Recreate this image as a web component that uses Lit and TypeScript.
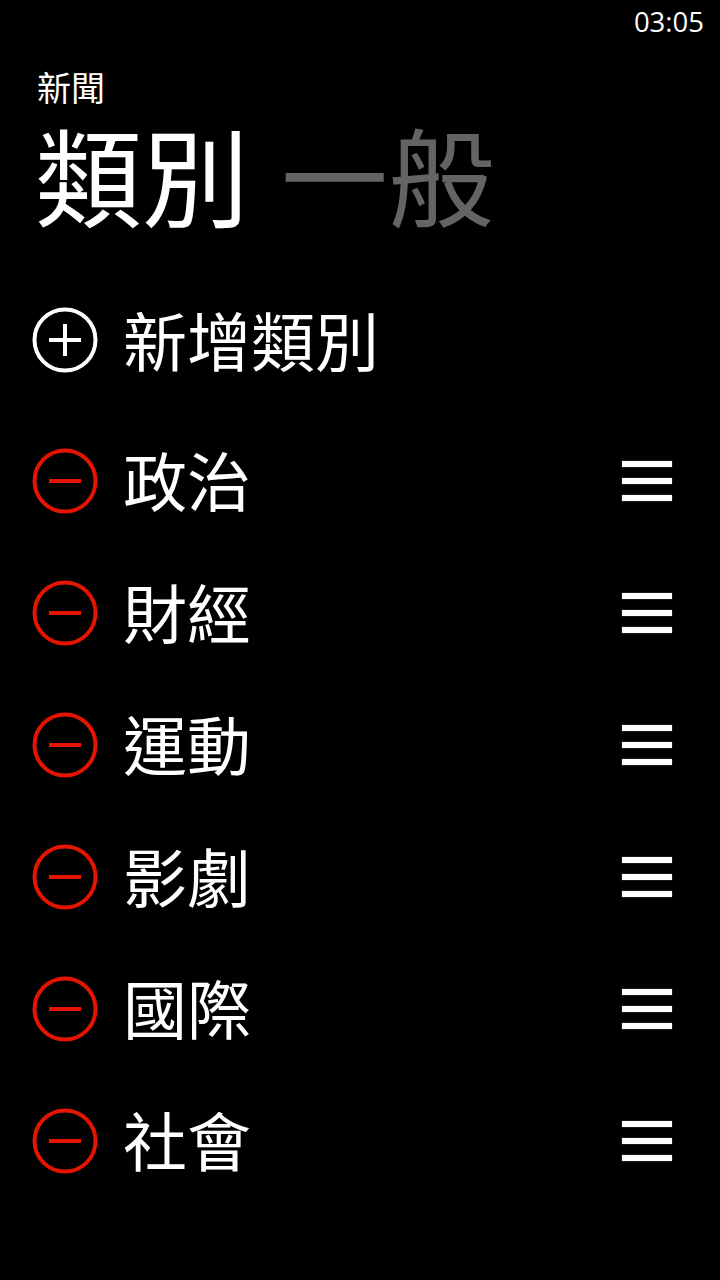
import { LitElement, html, css } from "lit";
import { customElement } from "lit/decorators.js";

const items = ["政治", "財經", "運動", "影劇", "國際", "社會"];

@customElement("app-root")
export class AppRoot extends LitElement {
  static styles = css`
    :host { display: block; width: 720px; height: 1280px; background: #000; color: #fff; overflow: hidden;
      font-family: "Noto Sans CJK TC", "Noto Sans CJK SC", sans-serif; }
    .status { display: flex; justify-content: flex-end; padding: 3px 16px 0 0; height: 40px; box-sizing: border-box; font: 27.5px/38px "Open Sans", sans-serif; }
    .app { margin: 27px 0 0 37px; font-size: 34px; line-height: 40px; height: 40px; }
    .pivot { display: flex; gap: 32px; margin: 14px 0 0 35px; font-size: 107px; line-height: 104px; height: 104px; }
    .pivot span { display: block; }
    .pivot .off { color: #646464; }
    .list { display: flex; flex-direction: column; margin-top: 49px; padding-left: 32px; }
    .row { display: flex; align-items: center; height: 132px; font-size: 64px; }
    .row.add { height: 132px; margin-bottom: 9px; }
    .row svg.c { width: 66px; height: 66px; margin-right: 25px; flex: none; }
    .label { flex: 1; line-height: 66px; margin-bottom: 6px; }
    .add .label { margin-bottom: 4px; }
    .h { width: 50px; height: 40px; margin-right: 48px; display: flex; flex-direction: column; justify-content: space-between; }
    .h i { display: block; height: 6px; background: #fff; box-shadow: 0 0 1px #999; }
  `;
  icon(color: string, plus: boolean) {
    return html`<svg class="c" viewBox="0 0 66 66" fill="none" stroke-linecap="butt">
      <circle cx="33" cy="33" r="30.5" stroke=${color} stroke-width="4"></circle>
      <path d=${plus ? "M17 33H49M33 17V49" : "M17 33H49"} stroke=${color} stroke-width="4"></path>
    </svg>`;
  }
  render() {
    return html`
      <div class="status">03:05</div>
      <div class="app">新聞</div>
      <div class="pivot"><span>類別</span><span class="off">一般</span></div>
      <div class="list">
        <div class="row add">${this.icon("#fff", true)}<span class="label">新增類別</span></div>
        ${items.map(t => html`<div class="row">${this.icon("#e51400", false)}<span class="label">${t}</span>
          <div class="h"><i></i><i></i><i></i></div></div>`)}
      </div>`;
  }
}
